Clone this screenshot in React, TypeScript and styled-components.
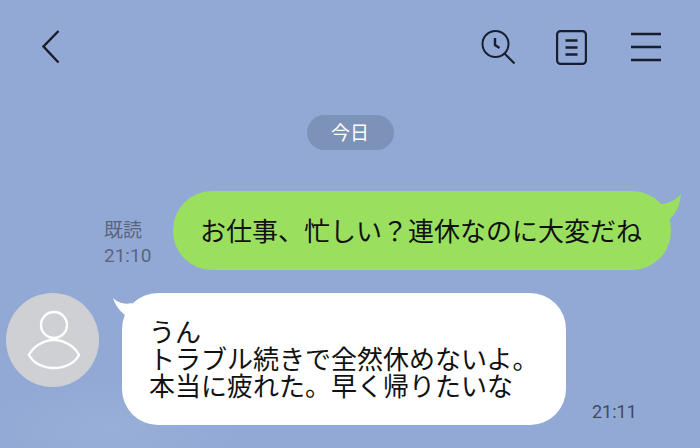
import React from "react";
import styled, {createGlobalStyle} from "styled-components";

const GlobalStyle = createGlobalStyle`
  html, body {
    margin: 0;
    padding: 0;
    overflow: hidden;
  }
  body {
    font-family: "Noto Sans CJK JP", "Noto Sans", sans-serif;
  }
`;

const App = () => {
    return (
        <RootDiv>
            <GlobalStyle />
            <HeaderDiv>
                <IconButton $width={18}>
                    <svg width="18" height="34" viewBox="0 0 18 34" fill="none" stroke="#191e2e" strokeWidth="2.4">
                        <path d="M16.5 1 L1.5 16.5 L16.5 32.5" />
                    </svg>
                </IconButton>
                <HeaderIcons>
                    <IconButton $width={35}>
                        <svg width="35" height="35" viewBox="0 0 35 35" fill="none" stroke="#191e2e" strokeWidth="2">
                            <circle cx="14.5" cy="14" r="13" />
                            <path d="M14 8 V15 L18.5 18" strokeWidth="2.4" />
                            <path d="M23.5 23.5 L33.5 33.5" strokeWidth="2.2" />
                        </svg>
                    </IconButton>
                    <IconButton $width={35}>
                        <svg width="31" height="35" viewBox="0 0 31 35" fill="none" stroke="#191e2e" strokeWidth="2.2">
                            <rect x="1.1" y="1.1" width="28.8" height="32.8" rx="3.5" />
                            <path d="M9.5 10.5 H21.5 M9.5 17.5 H21.5 M9.5 24.5 H21.5" strokeWidth="2.4" />
                        </svg>
                    </IconButton>
                    <IconButton $width={30}>
                        <svg width="30" height="30" viewBox="0 0 30 30" fill="none" stroke="#191e2e" strokeWidth="2.4">
                            <path d="M0 2 H30 M0 15 H30 M0 28 H30" />
                        </svg>
                    </IconButton>
                </HeaderIcons>
            </HeaderDiv>
            <DateRow>
                <DatePill>今日</DatePill>
            </DateRow>
            <SentRow>
                <ReadMeta>
                    <MetaText>既読</MetaText>
                    <TimeText>21:10</TimeText>
                </ReadMeta>
                <SentBubble>
                    お仕事、忙しい？連休なのに大変だね
                    <SentTail width="22" height="34" viewBox="0 0 22 34">
                        <path d="M2 10 C10 9.5 17 6 22 0 C21 12 16 24 2 32 Z" fill="#9ae05e" />
                    </SentTail>
                </SentBubble>
            </SentRow>
            <ReceivedRow>
                <Avatar>
                    <svg width="64" height="64" viewBox="0 0 64 64" fill="none" stroke="#ffffff" strokeWidth="2.4">
                        <circle cx="33" cy="17" r="13" />
                        <path d="M33 32 C44 32 54 39 58 47 C54 55 44 60 33 60 C22 60 12 55 8 47 C12 39 22 32 33 32 Z" />
                    </svg>
                </Avatar>
                <ReceivedBubble>
                    <ReceivedTail width="20" height="20" viewBox="0 0 20 20">
                        <path d="M0 0 C4 4 11 7 19 5 L19 20 L12 17 C7 13 2 7 0 0 Z" fill="#ffffff" />
                    </ReceivedTail>
                    <BubbleLine>うん</BubbleLine>
                    <BubbleLine>トラブル続きで全然休めないよ。</BubbleLine>
                    <BubbleLine>本当に疲れた。早く帰りたいな</BubbleLine>
                </ReceivedBubble>
                <ReceivedTime>21:11</ReceivedTime>
            </ReceivedRow>
        </RootDiv>
    )
}

export default App;

const RootDiv = styled.div`
  display: flex;
  flex-direction: column;
  width: 700px;
  height: 448px;
  overflow: hidden;
  background:
    radial-gradient(ellipse 130px 50px at 110px 430px, #97afd9 0%, rgba(151, 175, 217, 0) 100%),
    #93a9d5;
`

const HeaderDiv = styled.div`
  display: flex;
  justify-content: space-between;
  align-items: center;
  height: 36px;
  padding: 29px 39px 0 42px;
`

const HeaderIcons = styled.div`
  display: flex;
  align-items: center;
  gap: 40px;
`

const IconButton = styled.div<{$width: number}>`
  display: flex;
  align-items: center;
  width: ${(props) => props.$width}px;
`

const DateRow = styled.div`
  display: flex;
  justify-content: center;
  margin-top: 50px;
`

const DatePill = styled.div`
  display: flex;
  justify-content: center;
  align-items: center;
  width: 87px;
  height: 35px;
  padding-bottom: 2px;
  box-sizing: border-box;
  border-radius: 18px;
  background: #7d92b8;
  color: #ffffff;
  font-size: 19px;
`

const SentRow = styled.div`
  display: flex;
  justify-content: flex-end;
  align-items: flex-end;
  gap: 21px;
  margin-top: 41px;
  padding-right: 29px;
`

const ReadMeta = styled.div`
  display: flex;
  flex-direction: column;
  gap: 2px;
  width: 48px;
  padding-bottom: 1px;
`

const MetaText = styled.div`
  color: #5a657c;
  font-size: 19px;
  line-height: 25px;
  white-space: nowrap;
`

const TimeText = styled.div`
  color: #5a657c;
  font-family: Roboto, sans-serif;
  font-size: 19px;
  line-height: 26px;
`

const SentBubble = styled.div`
  position: relative;
  display: flex;
  align-items: center;
  width: 498px;
  height: 79px;
  box-sizing: border-box;
  padding: 0 0 3px 27px;
  border-radius: 39px;
  background: #9ae05e;
  color: #111;
  font-size: 26px;
  white-space: nowrap;
`

const SentTail = styled.svg`
  position: absolute;
  top: 3px;
  right: -10px;
`

const ReceivedRow = styled.div`
  display: flex;
  align-items: flex-start;
  margin-top: 23px;
  padding-left: 6px;
`

const Avatar = styled.div`
  display: flex;
  justify-content: center;
  align-items: center;
  flex-shrink: 0;
  width: 93px;
  height: 94px;
  border-radius: 50%;
  background: #cfd0d4;
`

const ReceivedBubble = styled.div`
  position: relative;
  display: flex;
  flex-direction: column;
  justify-content: center;
  width: 444px;
  height: 132px;
  box-sizing: border-box;
  margin-left: 23px;
  padding: 0 0 4px 27px;
  border-radius: 36px;
  background: #ffffff;
  color: #111;
`

const ReceivedTail = styled.svg`
  position: absolute;
  top: 5px;
  left: -9px;
`

const BubbleLine = styled.div`
  font-size: 26px;
  line-height: 27px;
  white-space: nowrap;
`

const ReceivedTime = styled.div`
  align-self: flex-end;
  margin-left: 26px;
  color: #3f4a60;
  font-family: Roboto, sans-serif;
  font-size: 18px;
  line-height: 26px;
`
